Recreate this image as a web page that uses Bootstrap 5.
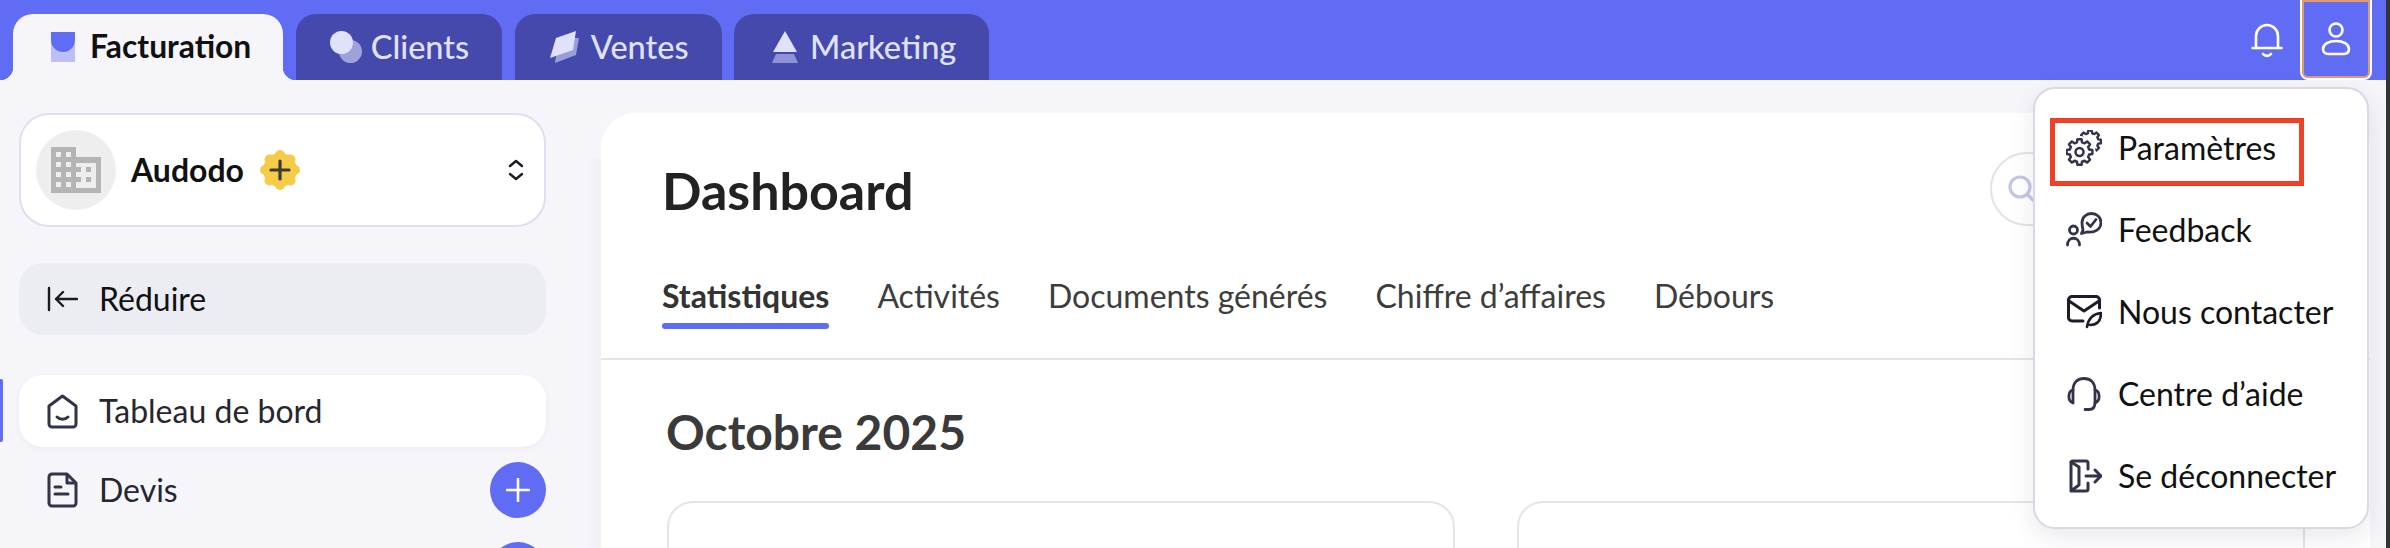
<!DOCTYPE html>
<html lang="fr">
<head>
    <meta charset="UTF-8">
    <title>Dashboard</title>
    <link rel="stylesheet" href="https://cdn.jsdelivr.net/npm/bootstrap@5.3.0/dist/css/bootstrap.min.css">
    <style>
        html, body { height: 100%; overflow: hidden; }
        body { font-family: "Lato", "Liberation Sans", sans-serif; background: #f5f5fa; color: #111; font-size: 32px; }

        .app-frame { width: 2386px; height: 548px; overflow: hidden; position: relative; }
        .edge-strip { position: absolute; top: 0; right: 0; width: 4px; height: 548px; background: #333338; }

        /* barre du haut */
        .top-bar { height: 80px; background: #616cf5; padding: 14px 0 0 13px; }
        .tab-strip { gap: 12.500px; }
        .app-tab { height: 66px; background: #4449ab; color: #e0e2fc; border-radius: 20px 20px 0 0; padding: 0 33px 0 34px; gap: 9px; font-weight: 500; font-size: 32.500px; text-decoration: none; }
        .app-tab.is-active { background: #f5f5fa; color: #111; font-weight: 700; font-size: 31.800px; padding: 0 32px 0 38px; gap: 15px; position: relative; }
        .app-tab.is-active::before, .app-tab.is-active::after { content: ""; position: absolute; bottom: 0; width: 13px; height: 13px; }
        .app-tab.is-active::before { left: -13px; background: radial-gradient(circle at 0 0, #616cf5 13px, #f5f5fa 13.500px); }
        .app-tab.is-active::after { right: -13px; background: radial-gradient(circle at 100% 0, #616cf5 13px, #f5f5fa 13.500px); }
        .app-tab.tab-wide { gap: 10px; }
        .app-tab.tab-last { padding-left: 38px; gap: 12px; }
        .bell-btn { width: 60px; height: 80px; margin-top: -14px; margin-right: 3px; }
        .user-btn { width: 72px; height: 80px; margin-top: -14px; margin-right: 14px; border: 2px solid #fff; border-top-width: 0; border-radius: 0 0 8px 8px; box-shadow: inset 0 0 0 2px #e09a73; }

        /* colonne de gauche */
        .side-col { width: 586px; padding: 33px 40px 0 19px; flex-shrink: 0; }
        .side-edge { width: 15px; margin-top: 78px; background: linear-gradient(90deg, #f5f5fa, #efeff5); flex-shrink: 0; }
        .company-box { height: 114px; background: #fff; border: 2px solid #dfdff0; border-radius: 30px; padding: 0 20px 0 15px; }
        .company-name { font-weight: 700; font-size: 32px; margin-left: 15px; margin-right: 16px; }
        .collapse-btn { height: 72px; margin-top: 36px; background: #ecedf3; border-radius: 24px; padding-left: 28px; gap: 21px; }
        .menu-line { height: 72px; padding-left: 28px; gap: 21px; border-radius: 24px; color: #26262e; }
        .menu-line.is-current { background: #fff; margin-top: 40px; box-shadow: 0 2px 6px rgba(40, 40, 90, .05); position: relative; }
        .menu-line.is-current::before { content: ""; position: absolute; left: -19px; top: 4px; width: 3px; height: 63px; background: #616cf5; border-radius: 0 2px 2px 0; }
        .round-add { width: 56px; height: 56px; background: #616cf5; border-radius: 50%; flex-shrink: 0; }
        .menu-plain { height: 80px; margin-top: 3px; }
        .menu-plain .menu-line { height: 80px; }
        .next-add { margin-top: 12px; }

        /* panneau principal */
        .main-panel { width: 1769px; margin-top: 33px; background: #fff; border-radius: 34px 30px 0 0; height: 435px; overflow: hidden; }
        .panel-head { height: 157px; padding: 39px 65px 0 61px; }
        .panel-title { font-size: 52px; font-weight: 700; line-height: 1; color: #222; margin: 12px 0 0; }
        .search-pill { width: 315px; height: 74px; border: 2px solid #e3e3e6; border-radius: 37px; padding-left: 15px; }
        .sub-tabs { height: 90px; padding-left: 61px; gap: 48px; border-bottom: 2px solid #e5e5e5; }
        .sub-tab { color: #3d3d3d; font-size: 32px; text-decoration: none; position: relative; padding-top: 2px; }
        .sub-tab.is-active { font-weight: 700; color: #333; }
        .sub-tab.is-active::after { content: ""; position: absolute; left: 0; right: 0; top: 53px; height: 6px; background: #616cf5; border-radius: 3px; }
        .period-title { font-size: 48px; font-weight: 700; color: #3a3a3a; padding-left: 65px; margin: 43px 0 0; line-height: 1.2; }
        .stat-row { padding: 0 65px 0 66px; margin-top: 40px; gap: 62px; }
        .stat-box { height: 120px; flex: 1 1 0; border: 2px solid #e5e5e5; border-radius: 26px; }

        /* menu utilisateur */
        .user-menu.dropdown-menu { top: 87px; right: 17px; left: auto; width: 336px; height: 442px; padding: 18px 0 0; border: 2px solid #d8d9e2; border-radius: 22px; box-shadow: 0 8px 24px rgba(30, 30, 70, .1); z-index: 5; }
        .user-menu .dropdown-item { height: 82px; padding: 0 0 0 31px; gap: 16px; font-size: 32px; color: #111; position: relative; }
        .user-menu .dropdown-item:hover { background: none; }
        .mark-box { position: absolute; left: 15px; top: 11px; width: 254px; height: 68px; border: 5px solid #ee4127; }
        .menu-ico { width: 36px; height: 36px; flex-shrink: 0; }
    </style>
</head>
<body>
<div class="app-frame">
    <header class="top-bar d-flex">
        <nav class="tab-strip d-flex flex-grow-1">
            <a class="app-tab is-active d-flex align-items-center" href="#">
                <svg width="24" height="30" viewBox="0 0 24 30"><rect y="10" width="24" height="20" fill="#bcc0fa"/><path d="M0 0h24v8a12 12 0 0 1-24 0z" fill="#616cf5"/></svg>
                Facturation
            </a>
            <a class="app-tab d-flex align-items-center" href="#">
                <svg width="32" height="32" viewBox="0 0 32 32"><circle cx="11.500" cy="11.500" r="11.500" fill="#e0e2fc"/><circle cx="20.500" cy="20.500" r="11.500" fill="#e0e2fc" fill-opacity=".58"/></svg>
                Clients
            </a>
            <a class="app-tab tab-wide d-flex align-items-center" href="#">
                <svg width="32" height="32" viewBox="0 0 32 32"><path d="M10 6l20 1-3 17L6 32z" fill="#9a9ddb"/><path d="M7 7L27 0l-3 19L1 27z" fill="#e0e2fc"/></svg>
                Ventes
            </a>
            <a class="app-tab tab-last d-flex align-items-center" href="#">
                <svg width="26" height="32" viewBox="0 0 26 32"><path d="M13 0l12 21H1z" fill="#e0e2fc"/><path d="M4 23h18l4 9H0z" fill="#8f92d6"/></svg>
                Marketing
            </a>
        </nav>
        <div class="bell-btn d-flex align-items-center justify-content-center">
            <svg width="32" height="36" viewBox="0 0 32 36" fill="none" stroke="#fff" stroke-width="2.600" stroke-linecap="round" stroke-linejoin="round"><path d="M1.500 26h29"/><path d="M5 26V14a11 11 0 0 1 22 0v12"/><path d="M12 32c2 2.500 6 2.500 8 0"/></svg>
        </div>
        <div class="user-btn d-flex align-items-center justify-content-center">
            <svg width="30" height="34" viewBox="0 0 30 34" fill="none" stroke="#fff" stroke-width="2.600"><circle cx="15" cy="8" r="6.500"/><path d="M15 19c7 0 13 3 13 8 0 4-3 5-6 5H8c-3 0-6-1-6-5 0-5 6-8 13-8z"/></svg>
        </div>
    </header>

    <div class="d-flex">
        <aside class="side-col">
            <div class="company-box d-flex align-items-center">
                <svg width="80" height="80" viewBox="0 0 80 80" class="flex-shrink-0">
                    <circle cx="40" cy="40" r="40" fill="#eee"/>
                    <path d="M15 17h25v10h25v36H15z" fill="#b4b4b4"/>
                    <g fill="#eee">
                        <rect x="20" y="22" width="5" height="5"/><rect x="30" y="22" width="5" height="5"/>
                        <rect x="20" y="32" width="5" height="5"/><rect x="30" y="32" width="5" height="5"/>
                        <rect x="20" y="42" width="5" height="5"/><rect x="30" y="42" width="5" height="5"/>
                        <rect x="20" y="52" width="5" height="5"/><rect x="30" y="52" width="5" height="5"/>
                        <rect x="40" y="33" width="20" height="25"/>
                    </g>
                    <g fill="#b4b4b4">
                        <rect x="50" y="37" width="5" height="5"/><rect x="50" y="47" width="5" height="5"/>
                        <rect x="40" y="37" width="5" height="5"/><rect x="40" y="47" width="5" height="5"/>
                    </g>
                </svg>
                <span class="company-name">Audodo</span>
                <svg width="40" height="40" viewBox="0 0 40 40" class="flex-shrink-0">
                    <g fill="#f5cc47"><circle cx="20" cy="20" r="17"/><circle cx="20" cy="5" r="5"/><circle cx="20" cy="35" r="5"/><circle cx="5" cy="20" r="5"/><circle cx="35" cy="20" r="5"/><circle cx="9.500" cy="9.500" r="5"/><circle cx="30.500" cy="9.500" r="5"/><circle cx="9.500" cy="30.500" r="5"/><circle cx="30.500" cy="30.500" r="5"/></g>
                    <path d="M20 11v18M11 20h18" stroke="#3a3a3a" stroke-width="3.200" stroke-linecap="round"/>
                </svg>
                <svg width="16" height="22" viewBox="0 0 16 22" class="ms-auto flex-shrink-0" fill="none" stroke="#1a1a22" stroke-width="2.400" stroke-linecap="round" stroke-linejoin="round"><path d="M2 7l6-5 6 5M2 15l6 5 6-5"/></svg>
            </div>

            <div class="collapse-btn d-flex align-items-center">
                <svg width="31" height="26" viewBox="0 0 31 26" fill="none" stroke="#1a1a22" stroke-width="2.400" stroke-linecap="round" stroke-linejoin="round"><path d="M2 2v22M30 13H9M16 6l-7 7 7 7"/></svg>
                Réduire
            </div>

            <div class="menu-line is-current d-flex align-items-center">
                <svg width="31" height="35" viewBox="0 0 31 35" fill="none" stroke="#33334a" stroke-width="3" stroke-linejoin="round" stroke-linecap="round"><path d="M15.500 2L29 12v18a3 3 0 0 1-3 3H5a3 3 0 0 1-3-3V12z"/><path d="M10 23c3 3 8 3 11 0"/></svg>
                Tableau de bord
            </div>
            <div class="menu-plain">
                <div class="menu-line d-flex align-items-center">
                    <svg width="31" height="36" viewBox="0 0 31 36" fill="none" stroke="#33334a" stroke-width="3" stroke-linejoin="round" stroke-linecap="round"><path d="M5 2h15l9 9v20a3 3 0 0 1-3 3H5a3 3 0 0 1-3-3V5a3 3 0 0 1 3-3z"/><path d="M20 3v8h8M8 15h6M8 22h13"/></svg>
                    Devis
                    <div class="round-add ms-auto d-flex align-items-center justify-content-center">
                        <svg width="24" height="24" viewBox="0 0 24 24" stroke="#fff" stroke-width="2.600" stroke-linecap="round"><path d="M12 1v22M1 12h22"/></svg>
                    </div>
                </div>
            </div>
            <div class="d-flex justify-content-end"><div class="round-add next-add"></div></div>
        </aside>
        <div class="side-edge"></div>

        <main class="main-panel">
            <div class="panel-head d-flex justify-content-between align-items-start">
                <h1 class="panel-title">Dashboard</h1>
                <div class="search-pill d-flex align-items-center">
                    <svg width="30" height="30" viewBox="0 0 30 30" fill="none" stroke="#c3c6e4" stroke-width="3.200" stroke-linecap="round"><circle cx="13" cy="13" r="10"/><path d="M21 21l6 6"/></svg>
                </div>
            </div>
            <nav class="sub-tabs d-flex">
                <a class="sub-tab is-active" href="#">Statistiques</a>
                <a class="sub-tab" href="#">Activités</a>
                <a class="sub-tab" href="#">Documents générés</a>
                <a class="sub-tab" href="#">Chiffre d’affaires</a>
                <a class="sub-tab" href="#">Débours</a>
            </nav>
            <h2 class="period-title">Octobre 2025</h2>
            <div class="stat-row d-flex">
                <div class="stat-box"></div>
                <div class="stat-box"></div>
            </div>
        </main>
    </div>

    <div class="user-menu dropdown-menu show">
        <a class="dropdown-item d-flex align-items-center" href="#">
            <span class="mark-box"></span>
            <svg class="menu-ico" viewBox="0 0 36 36" fill="none" stroke="#33334a" stroke-linejoin="round">
                <defs><path id="gear-shape" d="M9.660-2.590L12.840-2.030V2.030L9.660 2.590L8.660 5L10.520 7.640L7.640 10.520L5 8.660L2.590 9.660L2.030 12.840H-2.030L-2.590 9.660L-5 8.660L-7.640 10.520L-10.520 7.640L-8.660 5L-9.660 2.590L-12.840 2.030V-2.030L-9.660-2.590L-8.660-5L-10.520-7.640L-7.640-10.520L-5-8.660L-2.590-9.660L-2.030-12.840H2.030L2.590-9.660L5-8.660L7.640-10.520L10.520-7.640L8.660-5z"/></defs>
                <use href="#gear-shape" transform="translate(24 11.500) scale(.85)" stroke-width="2.800"/>
                <circle cx="13.500" cy="22" r="16" fill="#fff" stroke="none"/>
                <use href="#gear-shape" transform="translate(13.500 22)" stroke-width="2.500"/>
                <circle cx="13.500" cy="22" r="4" stroke-width="2.500"/>
            </svg>
            Paramètres
        </a>
        <a class="dropdown-item d-flex align-items-center" href="#">
            <svg class="menu-ico" viewBox="0 0 36 36" fill="none" stroke="#33334a" stroke-width="2.800" stroke-linecap="round" stroke-linejoin="round"><circle cx="7.500" cy="18" r="4"/><path d="M1.500 33c0-9 12-9 12 0"/><path d="M17 18l-1.500 3.500L21 20c8 1 14-3 14-9.500C35 5 30.500 1.500 25.500 1.500S16 5 16 10.500c0 3 .5 5 1 7.500z"/><path d="M21 11l3.500 3.500L30 7.500"/></svg>
            Feedback
        </a>
        <a class="dropdown-item d-flex align-items-center" href="#">
            <svg class="menu-ico" viewBox="0 0 36 36" fill="none" stroke="#1d1d2a" stroke-width="3" stroke-linecap="round" stroke-linejoin="round"><path d="M17 27H6a3.500 3.500 0 0 1-3.500-3.500V6A3.500 3.500 0 0 1 6 2.500h24A3.500 3.500 0 0 1 33.500 6v8"/><path d="M3 7l15 10L33 7"/><path d="M21 33c1-7 5-13 14-14 0 7-3 12-11 12" stroke-width="2.600"/></svg>
            Nous contacter
        </a>
        <a class="dropdown-item d-flex align-items-center" href="#">
            <svg class="menu-ico" viewBox="0 0 36 36" fill="none" stroke="#33334a" stroke-width="2.800" stroke-linecap="round" stroke-linejoin="round"><path d="M7 14C7 6 12 2.500 18 2.500S29 6 29 14"/><path d="M7 14c-5 1-6 11 0 13zM29 14c5 1 6 11 0 13z"/><path d="M29 27c0 5-3 6.500-6 6.500h-4"/></svg>
            Centre d’aide
        </a>
        <a class="dropdown-item d-flex align-items-center" href="#">
            <svg class="menu-ico" viewBox="0 0 36 36" fill="none" stroke="#33334a" stroke-width="3" stroke-linecap="round" stroke-linejoin="round"><path d="M22 11V5a2 2 0 0 0-2-2H7a2 2 0 0 0-2 2v26a2 2 0 0 0 2 2h13a2 2 0 0 0 2-2v-6"/><path d="M5 4l8 5v18l-8 6M13 9v18"/><path d="M20 18h15M29 12l6 6-6 6"/></svg>
            Se déconnecter
        </a>
    </div>
</div>
<div class="edge-strip"></div>
<script src="https://cdn.jsdelivr.net/npm/bootstrap@5.3.0/dist/js/bootstrap.bundle.min.js"></script>
</body>
</html>
